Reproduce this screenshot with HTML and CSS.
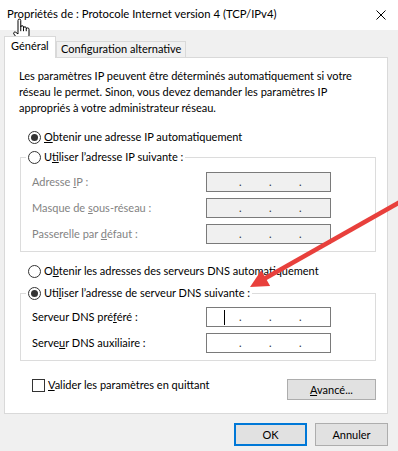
FILE: index.html
```html
<!DOCTYPE html>
<html lang="fr">
<head>
    <meta charset="UTF-8">
    <title>Propriétés de : Protocole Internet version 4 (TCP/IPv4)</title>
    <link rel="stylesheet" href="styles.css">
</head>
<body>
<div class="dialog">
    <div class="titlebar">
        <span class="title">Propriétés de : Protocole Internet version 4 (TCP/IPv4)</span>
        <svg class="close" width="10" height="10" viewBox="0 0 10 10"><path d="M0.5 0.5 L9.5 9.5 M9.5 0.5 L0.5 9.5" stroke="#000" stroke-width="1" fill="none"/></svg>
    </div>

    <div class="tabs">
        <div class="tab active">Général</div>
        <div class="tab">Configuration alternative</div>
    </div>

    <div class="panel">
        <p class="intro">Les paramètres IP peuvent être déterminés automatiquement si votre<br>réseau le permet. Sinon, vous devez demander les paramètres IP<br>appropriés à votre administrateur réseau.</p>

        <div class="option first"><span class="radio checked"></span><span><u>O</u>btenir une adresse IP automatiquement</span></div>

        <fieldset class="group ip-group">
            <legend class="option"><span class="radio"></span><span>U<u>t</u>iliser l’adresse IP suivante :</span></legend>
            <div class="field disabled">
                <span>Adresse <u>I</u>P :</span>
                <div class="ip"><span class="lead"></span><span class="dot">.</span><span class="dot">.</span><span class="dot">.</span></div>
            </div>
            <div class="field disabled">
                <span>Masque de <u>s</u>ous-réseau :</span>
                <div class="ip"><span class="lead"></span><span class="dot">.</span><span class="dot">.</span><span class="dot">.</span></div>
            </div>
            <div class="field disabled">
                <span>Passerelle par <u>d</u>éfaut :</span>
                <div class="ip"><span class="lead"></span><span class="dot">.</span><span class="dot">.</span><span class="dot">.</span></div>
            </div>
        </fieldset>

        <div class="option dns-auto"><span class="radio"></span><span>O<u>b</u>tenir les adresses des serveurs DNS automatiquement</span></div>

        <fieldset class="group dns-group">
            <legend class="option"><span class="radio checked"></span><span>Uti<u>l</u>iser l’adresse de serveur DNS suivante :</span></legend>
            <div class="field">
                <span>Serveur DNS pré<u>f</u>éré :</span>
                <div class="ip"><span class="lead"><i class="caret"></i></span><span class="dot">.</span><span class="dot">.</span><span class="dot">.</span></div>
            </div>
            <div class="field">
                <span>Serve<u>u</u>r DNS auxiliaire :</span>
                <div class="ip"><span class="lead"></span><span class="dot">.</span><span class="dot">.</span><span class="dot">.</span></div>
            </div>
        </fieldset>

        <div class="bottom-row">
            <div class="check"><span class="box"></span><span><u>V</u>alider les paramètres en quittant</span></div>
            <button class="btn advanced"><u>A</u>vancé...</button>
        </div>
    </div>

    <div class="footer">
        <button class="btn default">OK</button>
        <button class="btn">Annuler</button>
    </div>

    <svg class="overlay" width="398" height="451" viewBox="0 0 398 451">
        <!-- red annotation arrow -->
        <line x1="407" y1="198" x2="263" y2="279.5" stroke="#e8403c" stroke-width="4.5"/>
        <polygon points="250,287 261.3,270.3 270.1,285.9" fill="#e8403c"/>
        <!-- hand cursor -->
        <g transform="translate(12.5 18) scale(1.1)">
            <path d="M5,13 V2.25 A1.25,1.25 0 0 1 7.5,2.25 V8.25 A1.25,1.25 0 0 1 10,8.25 V9.25 A1.25,1.25 0 0 1 12.5,9.25 V10.25 A1.25,1.25 0 0 1 15,10.25 V15.5 C15,17.5 14.2,19 13.5,20.5 H5.8 C4.5,18.5 2.5,16.5 1.2,14.5 C0.6,13.5 1.6,12.3 2.8,12.9 L5,14.5 Z" fill="#fff" stroke="#000" stroke-width="0.9" stroke-linejoin="round"/>
            <path d="M7.5,8.25 V12 M10,9.25 V12 M12.5,10.25 V12" stroke="#000" stroke-width="0.9" fill="none"/>
        </g>
    </svg>
</div>
</body>
</html>
```

FILE: styles.css
```css
body {
    margin: 0;
    font-family: Lato, "Liberation Sans", sans-serif;
    font-size: 11px;
    color: #000;
    background-color: #f0f0f0;
}
.dialog {
    position: relative;
    width: 398px;
    height: 451px;
    overflow: hidden;
    background-color: #f0f0f0;
}
.titlebar {
    height: 30px;
    box-sizing: border-box;
    background-color: #fff;
    display: flex;
    justify-content: space-between;
    align-items: flex-start;
    padding: 6px 0 0 7px;
    line-height: 16px;
    font-size: 11.3px;
}
.close {
    margin: 4px 12px 0 0;
}
.tabs {
    display: flex;
    align-items: flex-end;
    height: 22px;
    margin: 6px 0 -1px 4px;
    position: relative;
    z-index: 1;
}
.tab {
    box-sizing: border-box;
    border: 1px solid #d9d9d9;
    border-bottom: none;
    line-height: 14px;
    white-space: nowrap;
}
.tab.active {
    width: 52px;
    height: 22px;
    padding: 2px 0 0 6px;
    background-color: #fff;
}
.tab + .tab {
    width: 130px;
    height: 16px;
    margin-bottom: 1px;
    padding: 0 0 0 4px;
    background-color: #f0f0f0;
}
.panel {
    height: 357px;
    box-sizing: border-box;
    margin: 0 10px 0 4px;
    padding: 10px 11px 0 14px;
    border: 1px solid #d9d9d9;
    background-color: #fff;
    line-height: 16px;
    white-space: nowrap;
}
.intro {
    margin: 0;
}
.option {
    display: flex;
    align-items: center;
    gap: 3px;
    height: 16px;
}
.option.first {
    margin: 13px 0 0 9px;
}
.option.dns-auto {
    margin: 11px 0 0 9px;
}
.radio {
    width: 13px;
    height: 13px;
    box-sizing: border-box;
    border: 1px solid #333;
    border-radius: 50%;
    background-color: #fff;
    display: flex;
    align-items: center;
    justify-content: center;
}
.radio.checked::after {
    content: "";
    width: 7px;
    height: 7px;
    border-radius: 50%;
    background-color: #333;
}
.group {
    margin: 0 0 0 1px;
    padding: 7px 44px 7px 11px;
    border: 1px solid #dcdcdc;
    display: flex;
    flex-direction: column;
    gap: 6px;
}
.ip-group {
    margin-top: 4px;
}
.dns-group {
    margin-top: 6px;
    padding-top: 6px;
}
.group legend {
    margin-left: -6px;
    padding: 0 2px 0 2px;
}
.field {
    display: flex;
    justify-content: space-between;
    align-items: center;
    height: 20px;
}
.field.disabled > span {
    color: #838383;
}
.ip {
    width: 125px;
    height: 20px;
    box-sizing: border-box;
    border: 1px solid #7a7a7a;
    background-color: #fff;
    display: flex;
    line-height: 18px;
    color: #333;
}
.disabled .ip {
    background-color: #f0f0f0;
}
.lead {
    width: 32px;
    display: flex;
    align-items: center;
}
.dot {
    width: 30px;
}
.caret {
    display: block;
    width: 1px;
    height: 15px;
    margin-left: 17px;
    background-color: #000;
}
.bottom-row {
    display: flex;
    justify-content: space-between;
    align-items: flex-start;
    margin-top: 16px;
}
.check {
    display: flex;
    gap: 3px;
    margin-left: 13px;
}
.box {
    width: 13px;
    height: 13px;
    box-sizing: border-box;
    margin-top: 2px;
    border: 1px solid #333;
    background-color: #fff;
}
.btn {
    font: inherit;
    color: #000;
    background-color: #e1e1e1;
    border: 1px solid #adadad;
    padding: 0;
    box-sizing: border-box;
}
.advanced {
    width: 89px;
    height: 21px;
    margin-top: 2px;
}
.footer {
    display: flex;
    justify-content: flex-end;
    gap: 8px;
    padding: 9px 10px 0 0;
}
.footer .btn {
    width: 73px;
    height: 23px;
}
.btn.default {
    border: 2px solid #0078d7;
}
.overlay {
    position: absolute;
    left: 0;
    top: 0;
    pointer-events: none;
}
```
